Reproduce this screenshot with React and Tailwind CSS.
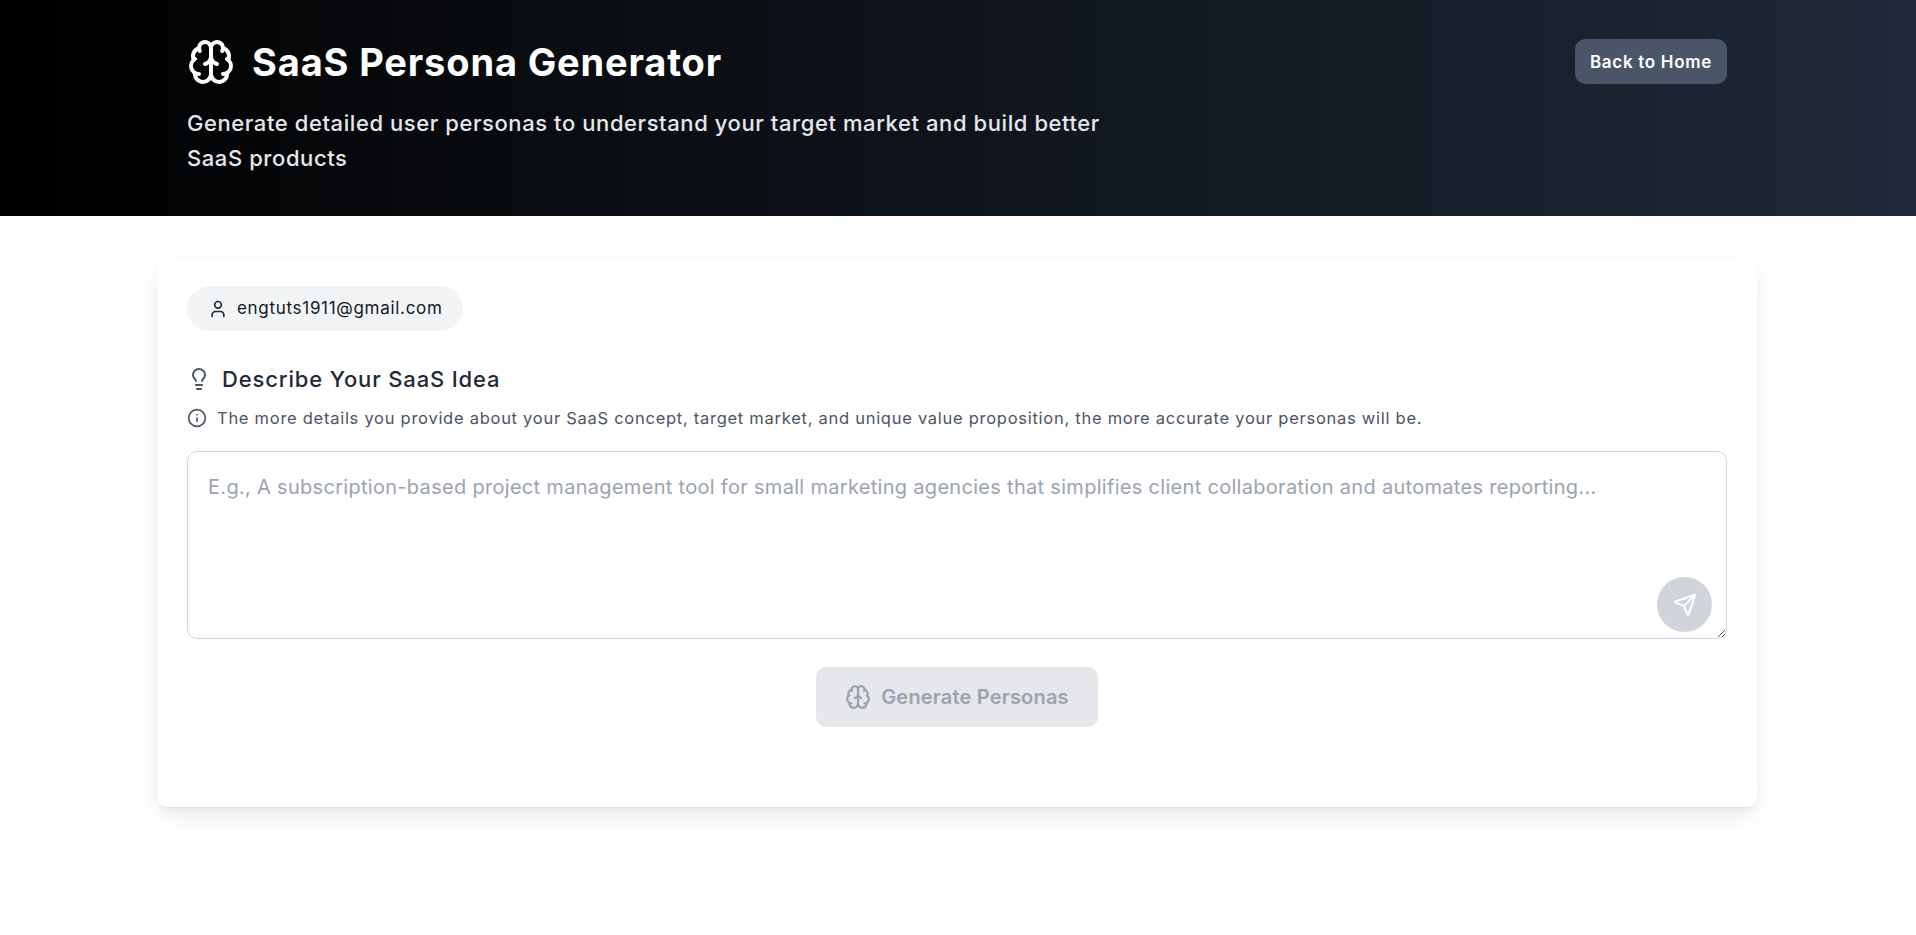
import { Brain, Info, Lightbulb, Send, User } from "lucide-react";

const fonte = "font-['Inter','Liberation_Sans',sans-serif]";

// --- Bandeau du haut ---
function Header() {
  return (
    <header className="h-[216px] bg-linear-to-r/srgb from-black to-[#1f2937]">
      <div className="flex items-start justify-between pl-[187px] pr-[189px] pt-[34px]">
        <div>
          <div className="flex items-center gap-[17px]">
            <Brain className="h-[48px] w-[48px] text-white" strokeWidth={2} />
            <h1 className="text-[38px] font-bold leading-[56px] tracking-[0.85px] text-white">SaaS Persona Generator</h1>
          </div>
          <p className="mt-[16px] w-[930px] text-[22px] font-medium leading-[35px] tracking-[0.58px] text-[#e5e7eb]">
            Generate detailed user personas to understand your target market and build better SaaS products
          </p>
        </div>
        <button className="mt-[5px] h-[45px] w-[152px] rounded-[10px] bg-[#4a5568] pt-[2px] text-[17px] font-semibold tracking-[0.7px] text-white">
          Back to Home
        </button>
      </div>
    </header>
  );
}

// --- Formulaire principal ---
function Carte() {
  return (
    <section className="ml-[157px] mr-[159px] mt-[43px] h-[548px] rounded-[10px] bg-white px-[30px] pt-[27px] shadow-[0_10px_25px_-3px_rgba(0,0,0,0.1),0_4px_6px_-4px_rgba(0,0,0,0.1)]">
      <div className="flex h-[45px] w-[276px] items-center gap-[9px] rounded-full bg-[#f3f4f6] pl-[21px]">
        <User className="h-[20px] w-[20px] text-[#1f2937]" strokeWidth={2} />
        <span className="pt-[1px] text-[17px] tracking-[0.7px] text-[#111827]">engtuts1911@gmail.com</span>
      </div>

      <div className="mt-[33px] flex items-center gap-[11px]">
        <Lightbulb className="h-[24px] w-[24px] text-[#4b5563]" strokeWidth={2} />
        <h2 className="text-[22px] font-medium leading-[30px] tracking-[0.85px] text-[#1f2937]">Describe Your SaaS Idea</h2>
      </div>

      <div className="mt-[12px] flex items-center gap-[10px]">
        <Info className="h-[20px] w-[20px] text-[#4b5563]" strokeWidth={2} />
        <p className="text-[16.5px] leading-[24px] tracking-[0.73px] text-[#4b5563]">
          The more details you provide about your SaaS concept, target market, and unique value proposition, the more accurate your personas will be.
        </p>
      </div>

      <div className="relative mt-[21px]">
        <textarea
          placeholder="E.g., A subscription-based project management tool for small marketing agencies that simplifies client collaboration and automates reporting..."
          className="block h-[188px] w-full rounded-[10px] border border-[#d1d5db] px-[20px] pb-[17px] pt-[21px] text-[20px] leading-[28px] tracking-[0.3px] outline-none placeholder:text-[#9ca3af]"
        />
        <button className="absolute bottom-[7px] right-[15px] flex h-[55px] w-[55px] items-center justify-center rounded-full bg-[#d1d5db]">
          <Send className="h-[24px] w-[24px] text-white" strokeWidth={2} />
        </button>
      </div>

      <div className="mt-[28px] flex justify-center">
        <button className="flex h-[60px] w-[282px] items-center justify-center gap-[10px] rounded-[10px] bg-[#e5e7eb] text-[20px] font-semibold tracking-[0.2px] text-[#9ca3af]">
          <Brain className="h-[26px] w-[26px]" strokeWidth={2} />
          Generate Personas
        </button>
      </div>
    </section>
  );
}

// --- Page complète ---
export default function App() {
  return (
    <div className={`min-h-screen bg-white ${fonte}`}>
      <Header />
      <Carte />
    </div>
  );
}
